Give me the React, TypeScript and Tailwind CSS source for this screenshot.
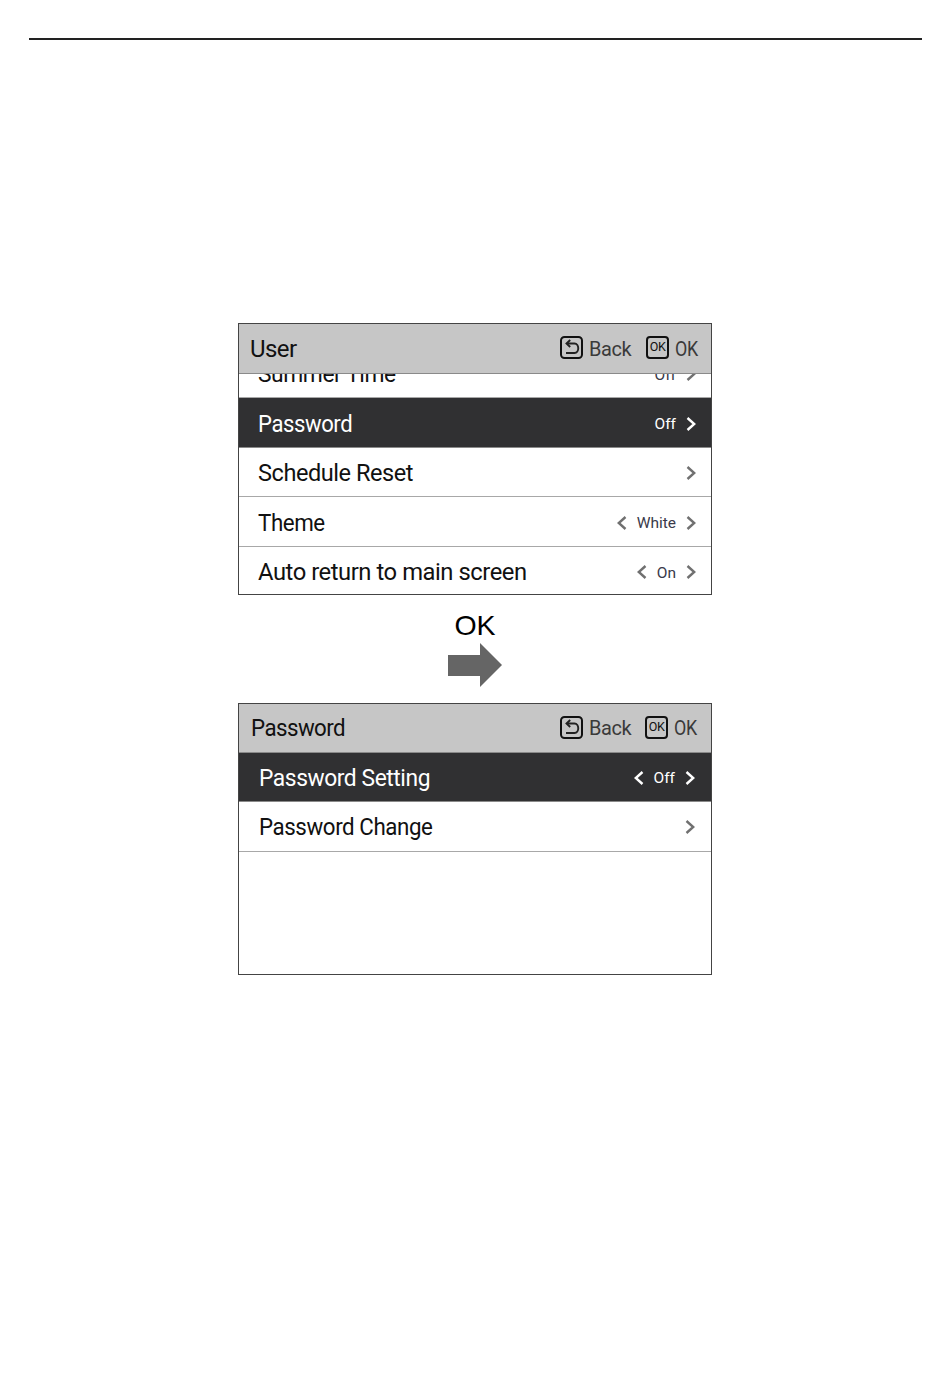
import * as React from "react";

function Chevron({ dir, color }: { dir: "left" | "right"; color: string }) {
  return (
    <svg width="10" height="14" viewBox="0 0 10 14" fill="none" className="shrink-0">
      <path
        d={dir === "right" ? "M1.5 1 L8.2 7 L1.5 13" : "M8.5 1 L1.8 7 L8.5 13"}
        stroke={color}
        strokeWidth="2.4"
      />
    </svg>
  );
}

function BackKey() {
  return (
    <svg width="23" height="23" viewBox="0 0 23 23" fill="none" className="-mt-[2px] shrink-0">
      <rect x="1" y="1" width="21" height="21" rx="3.5" stroke="#111" strokeWidth="2" />
      <path d="M7 7.5 H14.5 C19.5 7.5 19.5 17 14.5 17 H6" stroke="#222" strokeWidth="1.9" />
      <path d="M10.2 4 L6.5 7.5 L10.2 11" stroke="#222" strokeWidth="1.9" />
    </svg>
  );
}

function OkKey() {
  return (
    <div className="-mt-[2px] flex h-[23px] w-[23px] shrink-0 items-center justify-center rounded-[4px] border-2 border-[#111] text-[12.5px] leading-none tracking-[-0.3px] text-[#111]">
      OK
    </div>
  );
}

function Header({
  title,
  titleScale = "",
  gap,
  className = "",
}: {
  title: string;
  titleScale?: string;
  gap: string;
  className?: string;
}) {
  return (
    <div
      className={`relative z-10 flex shrink-0 items-center justify-between border-b border-[#8a8a8a] bg-[#c6c6c6] ${className}`}
    >
      <span className={`origin-left text-[24px] tracking-[-0.6px] text-[#111] ${titleScale}`}>{title}</span>
      <div className={`flex items-center ${gap}`}>
        <div className="flex items-center gap-[6px]">
          <BackKey />
          <span className="mt-[2px] origin-left scale-x-[0.95] text-[21px] tracking-[-0.4px] text-[#3a3a3a]">Back</span>
        </div>
        <div className="flex items-center gap-[6px]">
          <OkKey />
          <span className="mt-[2px] origin-left scale-x-[0.85] text-[21px] tracking-[-0.4px] text-[#3a3a3a]">OK</span>
        </div>
      </div>
    </div>
  );
}

interface RowProps {
  label: string;
  labelScale: string;
  value?: string;
  left?: boolean;
  right?: boolean;
  active?: boolean;
  className?: string;
}

function Row({ label, labelScale, value, left, right = true, active, className = "" }: RowProps) {
  const chevron = active ? "#ffffff" : "#707070";
  return (
    <div
      className={`flex shrink-0 items-center justify-between border-b ${
        active ? "border-[#8a8a8a] bg-[#303032] text-white" : "border-[#a8a8a8] bg-white text-[#111]"
      } ${className}`}
    >
      <span className={`origin-left text-[24px] tracking-[-0.45px] ${labelScale}`}>{label}</span>
      <div className="flex items-center gap-[10px]">
        {left && <Chevron dir="left" color={chevron} />}
        {value && (
          <span className={`mt-[2px] text-[15.5px] ${active ? "text-white" : "text-[#3a3a4a]"}`}>{value}</span>
        )}
        {right && <Chevron dir="right" color={chevron} />}
      </div>
    </div>
  );
}

function Screen({ children }: { children: React.ReactNode }) {
  return (
    <div className="flex h-[272px] w-[474px] flex-col overflow-hidden border border-[#444] bg-white">
      {children}
    </div>
  );
}

const rowA = "h-[49.5px] pl-[19px] pr-[15px] pt-[3px]";
const rowB = "pl-[20px] pr-[16px]";

export default function App() {
  return (
    <div className="flex h-[1383px] w-[950px] flex-col items-center bg-white font-['Roboto',sans-serif]">
      <div className="mt-[38px] ml-[1px] h-[2px] w-[893px] bg-[#222]" />

      <div className="mt-[283px]">
        <Screen>
          <Header title="User" gap="gap-[13px]" className="h-[50px] pl-[11px] pr-[9px]" />
          <div className="flex flex-col overflow-hidden">
            <Row label="Summer Time" labelScale="scale-x-[0.95]" value="Off" className={`-mt-[25.5px] ${rowA}`} />
            <Row label="Password" labelScale="scale-x-[0.92]" value="Off" active className={rowA} />
            <Row label="Schedule Reset" labelScale="scale-x-[0.98]" className={rowA} />
            <Row label="Theme" labelScale="scale-x-[0.93]" value="White" left className={rowA} />
            <Row label="Auto return to main screen" labelScale="scale-x-[0.99]" value="On" left className={`border-b-0 pb-[1px] ${rowA}`} />
          </div>
        </Screen>
      </div>

      <div className="mt-[14px] font-['Liberation_Sans',sans-serif] text-[28.5px] leading-[32px] text-black">OK</div>
      <svg width="54" height="44" viewBox="0 0 54 44" className="mt-[2px] shrink-0">
        <path d="M0 12 H32 V0 L54 22 L32 44 V33 H0 Z" fill="#656565" />
      </svg>

      <div className="mt-[16px]">
        <Screen>
          <Header title="Password" titleScale="scale-x-[0.93]" gap="gap-[12px]" className="h-[49px] pl-[12px] pr-[10px]" />
          <div className="flex flex-col">
            <Row label="Password Setting" labelScale="scale-x-[0.95]" value="Off" left active className={`h-[49px] pt-[2px] ${rowB}`} />
            <Row label="Password Change" labelScale="scale-x-[0.93]" className={`h-[50px] pt-[1px] ${rowB}`} />
          </div>
        </Screen>
      </div>
    </div>
  );
}
